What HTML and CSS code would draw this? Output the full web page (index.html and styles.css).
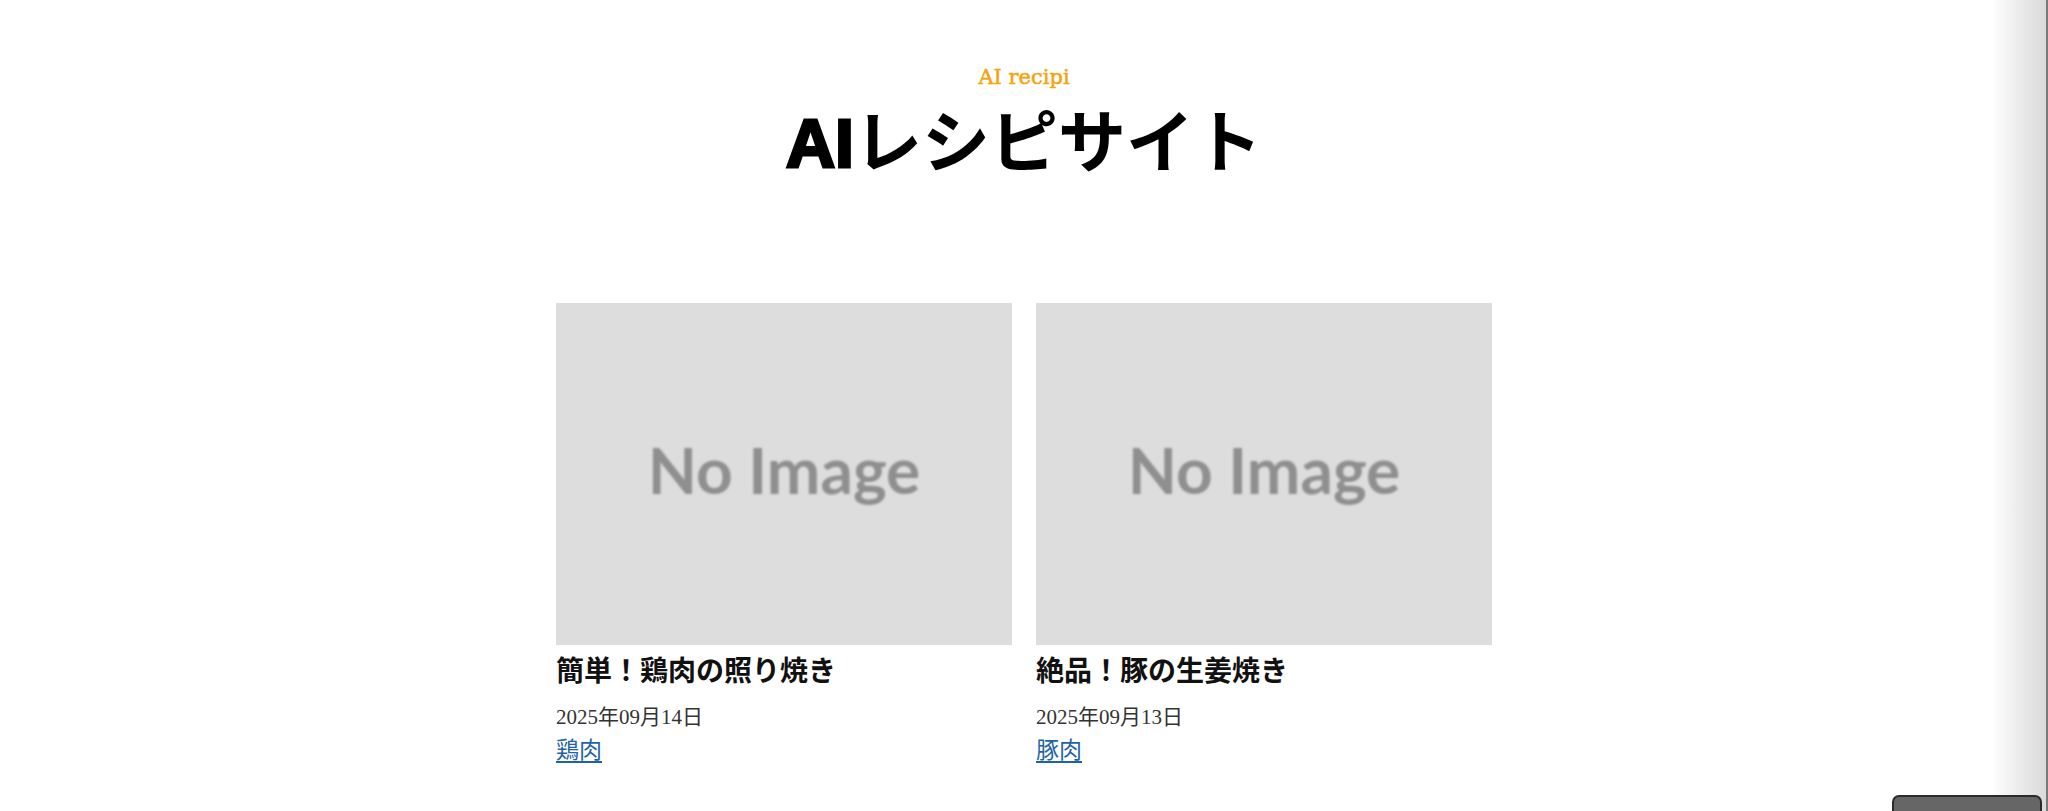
FILE: index.html
```html
<!DOCTYPE html>
<html lang="ja">
<head>
<meta charset="utf-8">
<title>AIレシピサイト</title>
<link rel="stylesheet" href="styles.css">
</head>
<body>
<header class="site-header">
  <p class="tagline">AI recipi</p>
  <h1 class="site-title"><span class="latin">AI</span>レシピサイト</h1>
</header>
<main class="recipes">
  <article class="card">
    <div class="thumb"><span class="noimg">No Image</span></div>
    <h2 class="card-title">簡単！鶏肉の照り焼き</h2>
    <p class="date">2025年09月14日</p>
    <a class="tag" href="#">鶏肉</a>
  </article>
  <article class="card">
    <div class="thumb"><span class="noimg">No Image</span></div>
    <h2 class="card-title">絶品！豚の生姜焼き</h2>
    <p class="date">2025年09月13日</p>
    <a class="tag" href="#">豚肉</a>
  </article>
</main>
<div class="edge-shadow"></div>
<div class="corner-button"></div>
</body>
</html>
```
FILE: styles.css
```css
html, body {
  margin: 0;
  padding: 0;
  background: #fff;
}
body {
  font-family: "Noto Sans CJK JP", sans-serif;
  color: #111;
}
.site-header {
  text-align: center;
  padding-top: 62px;
}
.tagline {
  margin: 0;
  font-family: "DejaVu Serif", "Noto Sans CJK JP", serif;
  font-size: 21px;
  font-weight: 400;
  -webkit-text-stroke: 0.5px #f5a30a;
  line-height: 30px;
  color: #f5a30a;
}
.site-title {
  margin: 6px 0 0;
  font-family: "Noto Sans CJK JP", sans-serif;
  font-size: 68px;
  line-height: 80px;
  font-weight: 700;
  color: #000;
}
.site-title .latin {
  font-family: "Liberation Sans", sans-serif;
  font-weight: 700;
  -webkit-text-stroke: 3px #000;
}
.recipes {
  width: 936px;
  margin: 120px auto 0;
  display: grid;
  grid-template-columns: 1fr 1fr;
  column-gap: 24px;
}
.card {
  display: flex;
  flex-direction: column;
  align-items: flex-start;
}
.thumb {
  width: 100%;
  aspect-ratio: 4 / 3;
  background: #dddddd;
  display: flex;
  align-items: center;
  justify-content: center;
}
.noimg {
  font-family: Lato, "Open Sans", sans-serif;
  font-weight: 700;
  font-size: 64px;
  color: #8f8f8f;
  filter: blur(0.8px);
  margin-top: -10px;
}
.card-title {
  margin: 4px 0 0;
  font-size: 28px;
  line-height: 40px;
  font-weight: 700;
  color: #111;
}
.date {
  margin: 14px 0 0;
  font-family: "Liberation Serif", "Noto Sans CJK JP", serif;
  font-size: 21px;
  line-height: 28px;
  color: #333;
}
.tag {
  margin-top: 0;
  font-size: 23px;
  line-height: 34px;
  color: #1f63a6;
  text-decoration: underline;
  text-underline-offset: 3px;
}
.edge-shadow {
  position: fixed;
  top: 0;
  right: 0;
  bottom: 0;
  width: 56px;
  background: linear-gradient(to right, rgba(220,220,220,0), #dadada);
  border-right: 2px solid #7a7a7a;
}
.corner-button {
  position: fixed;
  right: 6px;
  bottom: -30px;
  width: 146px;
  height: 42px;
  background: #666;
  border: 2px solid #2a2a2a;
  border-radius: 7px;
}
```
